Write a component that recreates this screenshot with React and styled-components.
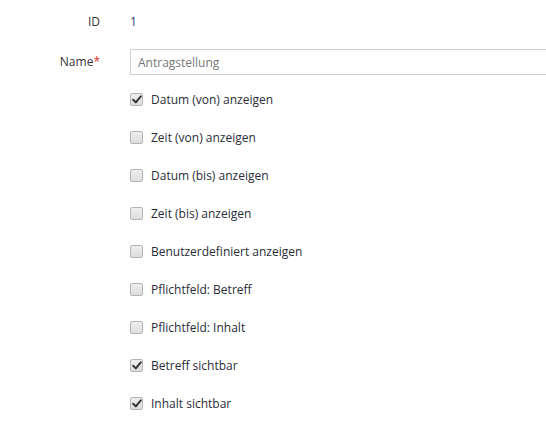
import React from "react";
import styled, { createGlobalStyle } from "styled-components";

const Global = createGlobalStyle`
  html, body { margin: 0; padding: 0; background: #fff; overflow: hidden; }
  body { font-family: "Open Sans", "DejaVu Sans", sans-serif; font-size: 12px; color: #333; }
`;

const Form = styled.div`
  display: grid;
  grid-template-columns: 100px 440px;
  column-gap: 30px;
  padding-top: 13px;
`;

const Label = styled.div`
  text-align: right;
  color: #333;
  height: ${(p) => p.$h}px;
  line-height: ${(p) => p.$h}px;
  margin-top: ${(p) => p.$mt || 0}px;
`;

const Value = styled.div`
  height: ${(p) => p.$h}px;
  line-height: ${(p) => p.$h}px;
  color: #1f3f7a;
`;

const Req = styled.span`
  color: #e0312b;
`;

const Field = styled.div`
  margin-top: 17px;
`;

const Input = styled.input`
  box-sizing: border-box;
  width: 430px;
  height: 26px;
  margin: 1px 0 0;
  border: 1px solid #cfcfcf;
  padding: 0 7px;
  font-family: inherit;
  font-size: 12px;
  color: #777;
  outline: none;
  background: #fff;
`;

const Checks = styled.div`
  grid-column: 2;
  display: flex;
  flex-direction: column;
  gap: 17px;
  padding-top: 14px;
`;

const CheckRow = styled.label`
  display: flex;
  align-items: center;
  gap: 8px;
  height: 21px;
  color: #2a2d38;
`;

const Box = styled.span`
  box-sizing: border-box;
  width: 13px;
  height: 13px;
  border: 1px solid #b4b4b4;
  border-radius: 2px;
  background: linear-gradient(#eeeeee, #dedede);
  display: flex;
  align-items: center;
  justify-content: center;
`;

const Check = () => (
  <svg width="10" height="9" viewBox="0 0 10 9">
    <path d="M1.2 4.8 L3.8 7.4 L8.8 1.4" fill="none" stroke="#333" strokeWidth="2" strokeLinecap="round" strokeLinejoin="round" />
  </svg>
);

const items = [
  ["Datum (von) anzeigen", true],
  ["Zeit (von) anzeigen", false],
  ["Datum (bis) anzeigen", false],
  ["Zeit (bis) anzeigen", false],
  ["Benutzerdefiniert anzeigen", false],
  ["Pflichtfeld: Betreff", false],
  ["Pflichtfeld: Inhalt", false],
  ["Betreff sichtbar", true],
  ["Inhalt sichtbar", true],
];

export default function App() {
  return (
    <>
      <Global />
      <Form>
        <Label $h={18}>ID</Label>
        <Value $h={18}>1</Value>
        <Label $h={26} $mt={18}>
          Name<Req>*</Req>
        </Label>
        <Field>
          <Input defaultValue="Antragstellung" readOnly />
        </Field>
        <Checks>
          {items.map(([t, c]) => (
            <CheckRow key={t}>
              <Box>{c && <Check />}</Box>
              {t}
            </CheckRow>
          ))}
        </Checks>
      </Form>
    </>
  );
}
